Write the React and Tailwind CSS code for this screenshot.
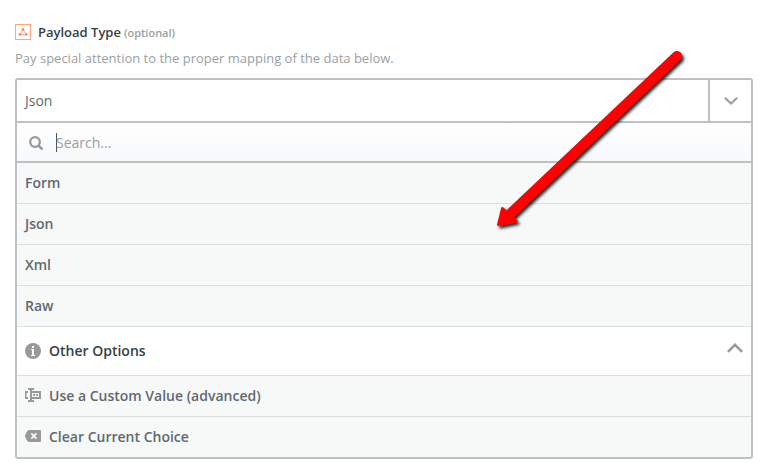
const choices = ["Form", "Json", "Xml", "Raw"];

function AppIcon() {
  return (
    <svg width="16" height="16" viewBox="0 0 16 16" fill="none" className="shrink-0">
      <rect x="0.5" y="0.5" width="15" height="15" stroke="#fda482" />
      <path d="M8 5.5 5.6 10M8.2 5.5l2.6 4.7M5 10.7h6" stroke="#fd9a74" strokeWidth="0.9" />
      <g fill="#fd8e64">
        <circle cx="7.9" cy="5.4" r="1.4" />
        <circle cx="4.9" cy="10.4" r="1.4" />
        <circle cx="11.2" cy="10.4" r="1.4" />
      </g>
    </svg>
  );
}

function SearchIcon() {
  return (
    <svg width="14" height="14" viewBox="0 0 14 14" fill="none" stroke="#959b9f" className="mt-px shrink-0">
      <circle cx="6" cy="6" r="4.8" strokeWidth="2.3" />
      <path d="M9.8 9.8 12.7 12.7" strokeWidth="2.6" strokeLinecap="round" />
    </svg>
  );
}

function InfoIcon() {
  return (
    <svg width="16" height="16" viewBox="0 0 16 16" className="shrink-0">
      <circle cx="8" cy="8" r="8" fill="#999" />
      <path fill="#fff" d="M7 3h2v2H7zM6 6h3v6h1v1H6v-1h1V7H6z" />
    </svg>
  );
}

function CustomIcon() {
  return (
    <svg width="16" height="14" viewBox="0 0 16 14" fill="#999" className="shrink-0">
      <path d="M3 0h6v2H7v1h9v8H7v1h2v2H3v-2h2V2H3zM7 5v4h7V5z" fillRule="evenodd" />
      <path d="M0 3h3v2H1.5v4H3v2H0zM8 6h2v2H8zM11 6h2v2h-2z" />
    </svg>
  );
}

function ClearIcon() {
  return (
    <svg width="16" height="12" viewBox="0 0 16 12" className="shrink-0">
      <path fill="#999" d="M4 0h11q1 0 1 1v10q0 1-1 1H4Q3 12 2.3 11L.3 7.2Q-.3 6 .3 4.8L2.3 1Q3 0 4 0z" />
      <path stroke="#f7f9f9" strokeWidth="1.8" d="m6.3 3.4 5.2 5.2m0-5.2L6.3 8.6" />
    </svg>
  );
}

function Arrow() {
  return (
    <svg width="204" height="196" viewBox="490 40 204 196" className="pointer-events-none absolute left-[490px] top-[40px]">
      <defs>
        <filter id="shadow" x="-10%" y="-10%" width="120%" height="120%">
          <feDropShadow dx="2" dy="2.5" stdDeviation="1.4" floodColor="#000" floodOpacity="0.85" />
        </filter>
      </defs>
      <g filter="url(#shadow)" fill="#fe0000" stroke="#fe0000" strokeLinejoin="round" strokeLinecap="round">
        <path d="M677 56 511 213" strokeWidth="10" />
        <path d="M502.5 208.5 498.5 224.5 516 221z" strokeWidth="3" />
      </g>
    </svg>
  );
}

export default function App() {
  return (
    <div className="relative h-[476px] w-[768px] overflow-hidden bg-white px-[15px] pt-[23px] font-['Open_Sans',sans-serif] text-[14px] text-[#5f696f]">
      <div className="flex h-[18px] items-center">
        <AppIcon />
        <span className="ml-[7px] mt-[2px] text-[13px] font-semibold text-[#354047]">Payload Type</span>
        <span className="ml-[3px] mt-[3px] text-[11px] font-semibold text-[#999fa3]">(optional)</span>
      </div>
      <p className="mt-[8px] h-[18px] text-[13px] leading-[18px] text-[#999fa3]">
        Pay special attention to the proper mapping of the data below.
      </p>

      <div className="mt-[11px] w-[738px] rounded-[3px] border-2 border-[#bdc1c5]">
        <div className="flex h-[43px] border-b-2 border-[#bdc1c5]">
          <div className="flex flex-1 items-center pl-[8px]">Json</div>
          <div className="flex w-[43px] items-center justify-center border-l-2 border-[#bdc1c5]">
            <svg width="14" height="8" viewBox="0 0 14 8" fill="none" stroke="#999fa3" strokeWidth="2.2">
              <path d="m.8.8 6.2 5.7L13.2.8" />
            </svg>
          </div>
        </div>

        <div className="flex h-[40px] items-center border-b-2 border-[#bdc1c5] bg-linear-to-b from-white to-[#f7f8fa] pl-[12px]">
          <SearchIcon />
          <span className="ml-[13px] h-[19px] w-px bg-[#4b5459]" />
          <span className="-ml-px text-[#999fa3]">Search...</span>
        </div>

        {choices.map((choice) => (
          <div key={choice} className="flex h-[41px] items-center border-b border-[#d9dee2] bg-[#f7f9f9] pb-[2px] pl-[8px] font-semibold">
            {choice}
          </div>
        ))}

        <div className="flex h-[49px] items-center border-b border-[#d9dee2] pl-[8px] pr-[8px] font-semibold text-[#354047]">
          <InfoIcon />
          <span className="mb-[2px] ml-[8px] flex-1">Other Options</span>
          <svg width="16" height="10" viewBox="0 0 16 10" fill="none" stroke="#999" strokeWidth="2.5" className="-mt-[6px]">
            <path d="m.9 8.8 7.1-7 7.1 7" />
          </svg>
        </div>
        <div className="flex h-[41px] items-center border-b border-[#d9dee2] bg-[#f7f9f9] pb-[2px] pl-[8px] font-semibold">
          <CustomIcon />
          <span className="ml-[8px]">Use a Custom Value (advanced)</span>
        </div>
        <div className="flex h-[40px] items-center bg-[#f7f9f9] pb-[2px] pl-[8px] font-semibold">
          <ClearIcon />
          <span className="ml-[8px]">Clear Current Choice</span>
        </div>
      </div>
      <Arrow />
    </div>
  );
}
